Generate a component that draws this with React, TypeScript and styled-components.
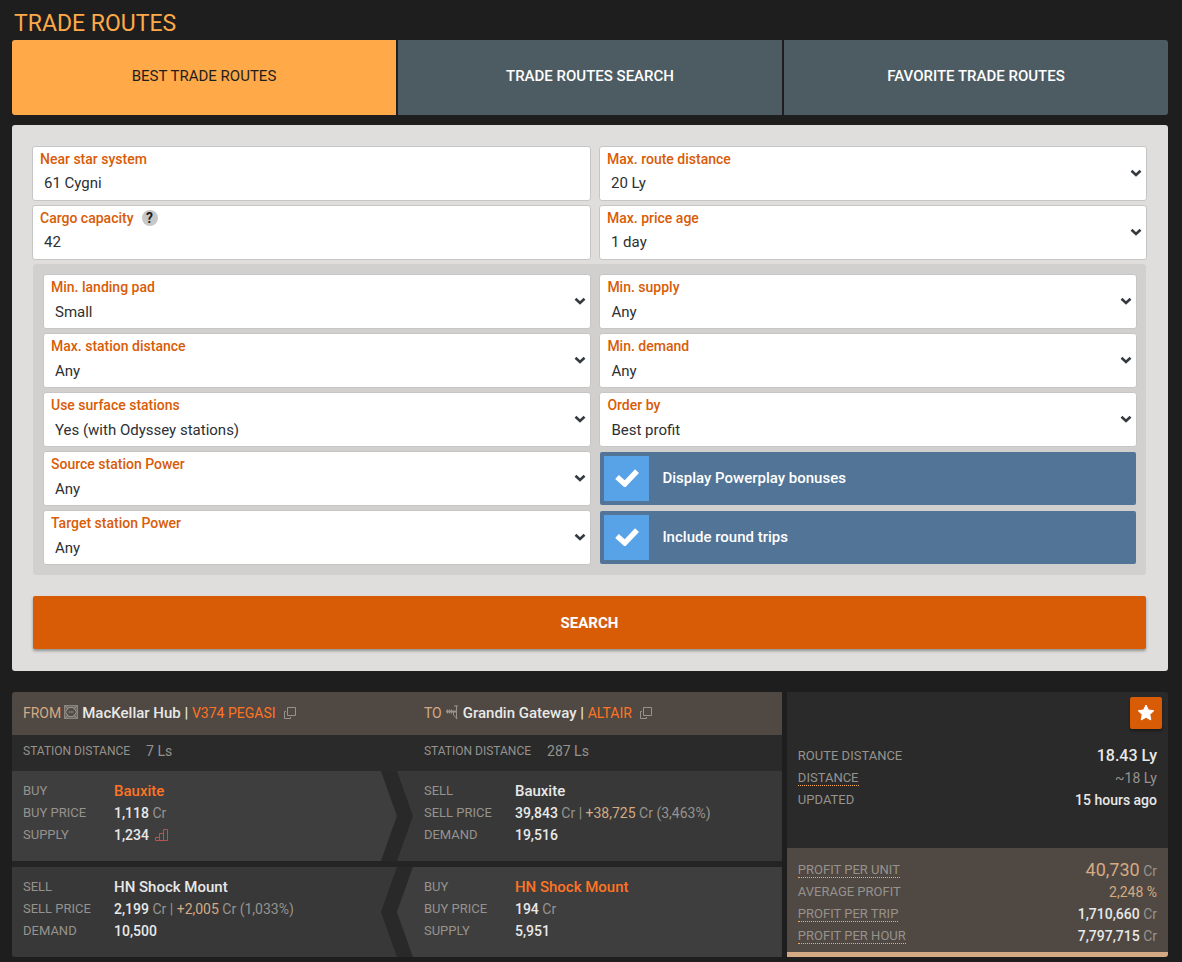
import React from 'react';
import styled, { createGlobalStyle } from 'styled-components';

const Global = createGlobalStyle`
  *, *::before, *::after { box-sizing: border-box; }
  body {
    margin: 0;
    background: #1e1e1e;
    color: #e8e8e8;
    font: 400 15px/22px Roboto, "Liberation Sans", sans-serif;
  }
  button, input, select { font: inherit; }
`;

const Page = styled.main`
  padding: 7px 14px 5px 12px;
`;

const Title = styled.h1`
  margin: 0;
  padding: 0 2px;
  font-size: 23px;
  line-height: 33px;
  font-weight: 400;
  color: #ffa948;
  text-transform: uppercase;
`;

const Tabs = styled.nav`
  display: grid;
  grid-template-columns: repeat(3, 1fr);
  gap: 2px;
  border-radius: 3px;
  overflow: hidden;
`;

const Tab = styled.a<{ $active?: boolean }>`
  display: flex;
  align-items: center;
  justify-content: center;
  height: 75px;
  padding-bottom: 4px;
  background: ${(p) => (p.$active ? '#ffa948' : '#4d5c63')};
  color: ${(p) => (p.$active ? '#1e1e1e' : '#fff')};
  font-size: 15px;
  font-weight: ${(p) => (p.$active ? 400 : 500)};
  text-decoration: none;
  text-transform: uppercase;
`;

const SearchForm = styled.form`
  margin-top: 10px;
  padding: 21px 21px 22px 20px;
  border-radius: 3px;
  background: #dfdedc;
`;

const FieldGrid = styled.div`
  display: grid;
  grid-template-columns: 51fr 50fr;
  gap: 4px 8px;
`;

const Advanced = styled(FieldGrid)`
  margin: 4px 1px 21px;
  padding: 10px 9px 10px 10px;
  border-radius: 3px;
  background: #d1d0ce;

  select { padding-top: 21px; }
`;

const FieldBox = styled.div`
  position: relative;
  height: 55px;
  border: 1px solid #c6c6c6;
  border-radius: 3px;
  background: #fff;
`;

const FieldHead = styled.div`
  position: absolute;
  top: 2px;
  left: 7px;
  display: flex;
  align-items: center;
  gap: 8px;
  line-height: 20px;
  pointer-events: none;
`;

const FieldLabel = styled.label`
  color: #d85c08;
  font-size: 14px;
  font-weight: 500;
`;

const HelpButton = styled.button`
  width: 16px;
  height: 16px;
  padding: 0;
  border: 0;
  border-radius: 50%;
  background: #c8c8c8;
  color: #1e1e1e;
  font-size: 14px;
  font-weight: 700;
  line-height: 16px;
  pointer-events: auto;
`;

const control = `
  display: block;
  width: 100%;
  height: 100%;
  padding: 19px 30px 0 11px;
  border: 0;
  border-radius: 3px;
  background: transparent;
  color: #2c2f33;
  appearance: none;
  outline: none;
`;

const TextInput = styled.input`
  ${control}
`;

const Select = styled.select`
  ${control}
`;

const SelectArrow = styled.svg`
  position: absolute;
  top: 22px;
  right: 4px;
  width: 12px;
  height: 8px;
  pointer-events: none;
`;

const CheckRow = styled.label`
  display: flex;
  align-items: center;
  gap: 13px;
  height: 53px;
  margin: 1px;
  padding: 0 0 1px 4px;
  border-radius: 2px;
  background: #527496;
  color: #fff;
  font-weight: 500;
`;

const CheckCell = styled.span`
  display: grid;
  place-items: center;
  width: 45px;
  height: 45px;
  background: #58a2e7;
`;

const CheckInput = styled.input`
  grid-area: 1 / 1;
  width: 100%;
  height: 100%;
  margin: 0;
  appearance: none;
`;

const CheckMark = styled.svg`
  grid-area: 1 / 1;
  width: 24px;
  height: 18px;
  pointer-events: none;
`;

const SearchButton = styled.button`
  display: block;
  width: calc(100% - 2px);
  height: 53px;
  margin: 0 1px;
  border: 0;
  border-radius: 2px;
  background: #d85c06;
  box-shadow: 0 2px 3px rgba(0, 0, 0, 0.35);
  color: #fff;
  font-size: 15px;
  font-weight: 700;
  text-transform: uppercase;
`;

const Result = styled.section`
  display: grid;
  grid-template-columns: 101fr 50fr;
  gap: 5px;
  margin-top: 21px;
`;

const Legs = styled.div`
  border-radius: 3px 0 0 3px;
  overflow: hidden;
  background: #242424;
`;

const Pair = styled.div<{ $bg: string; $height: number }>`
  display: grid;
  grid-template-columns: 1fr 1fr;
  align-items: center;
  min-height: ${(p) => p.$height}px;
  background: ${(p) => p.$bg};

  & > * { padding-left: 11px; }
  & > * + * { padding-left: 27px; }
`;

const Station = styled.div`
  display: flex;
  align-items: center;
  padding-bottom: 2px;
  white-space: pre;
`;

const Accent = styled.span`
  color: #d4aa84;
`;

const Direction = styled(Accent)`
  font-size: 14px;
`;

const Strong = styled.span`
  color: #e8e8e8;
  font-weight: 500;
`;

const Muted = styled.span`
  color: #96938e;
`;

const Link = styled.a`
  color: #ff7424;
  font-weight: 500;
  text-decoration: none;
`;

const SystemLink = styled(Link)`
  font-size: 14px;
  font-weight: 400;
`;

const TypeIcon = styled.svg`
  width: 14px;
  height: 14px;
  margin: 0 4px 1px 3px;
`;

const CopyButton = styled.button`
  display: flex;
  margin-left: 8px;
  padding: 0;
  border: 0;
  background: none;
`;

const Label = styled.dt`
  color: #96938e;
  font-size: 13px;
  text-transform: uppercase;
`;

const DistanceLabel = styled(Label)`
  font-size: 12px;
`;

const Distance = styled.dl`
  display: flex;
  gap: 16px;
  margin: 0;
  padding-bottom: 5px;
`;

const Value = styled.dd`
  margin: 0;
  font-size: 14px;
`;

const ItemName = styled(Value)`
  font-size: 15px;
`;

const Trades = styled.div`
  display: grid;
  grid-template-columns: 1fr 1fr;
  background: #292929;

  & + & { margin-top: 6px; }
`;

const shapes = {
  outRight: 'polygon(0 0, calc(100% - 16px) 0, 100% 50%, calc(100% - 16px) 100%, 0 100%)',
  inLeft: 'polygon(0 0, 100% 0, 100% 100%, 0 100%, 16px 50%)',
  inRight: 'polygon(0 0, 100% 0, calc(100% - 16px) 50%, 100% 100%, 0 100%)',
  outLeft: 'polygon(16px 0, 100% 0, 100% 100%, 16px 100%, 0 50%)',
};

const Trade = styled.dl<{ $shape: keyof typeof shapes; $buy?: boolean }>`
  display: grid;
  grid-template-columns: 91px 1fr;
  grid-auto-rows: 22px;
  height: 90px;
  margin: 0;
  padding: 9px 0 0 11px;
  background: ${(p) => (p.$buy ? '#3e3e3e' : '#383838')};
  clip-path: ${(p) => shapes[p.$shape]};

  & + & { padding-left: 27px; }
`;

const SupplyIcon = styled.svg`
  width: 13px;
  height: 12px;
  margin-left: 6px;
  vertical-align: -1px;
`;

const Summary = styled.aside`
  display: flex;
  flex-direction: column;
  border-bottom: 5px solid #d4aa84;
  border-radius: 0 3px 3px 0;
  background: #2a2a2a;
  overflow: hidden;
`;

const FavoriteButton = styled.button`
  display: grid;
  place-items: center;
  align-self: flex-end;
  width: 32px;
  height: 32px;
  margin: 5px 6px 16px 0;
  padding: 0 0 2px;
  border: 0;
  border-radius: 2px;
  background: #d85c06;
  box-shadow: 0 2px 3px rgba(0, 0, 0, 0.4);
`;

const Facts = styled.dl<{ $profit?: boolean }>`
  display: grid;
  grid-template-columns: 1fr auto;
  grid-auto-rows: 22px;
  align-items: center;
  margin: ${(p) => (p.$profit ? 'auto 0 0' : '0')};
  padding: ${(p) => (p.$profit ? '11px 11px 5px' : '0 11px')};
  background: ${(p) => (p.$profit ? '#504842' : 'transparent')};
`;

const FactValue = styled(Value)<{ $size?: number }>`
  text-align: right;

  & > span:first-child { font-size: ${(p) => p.$size ?? 14}px; }
`;

const Hint = styled.abbr`
  border-bottom: 1px dotted #ffa948;
  text-decoration: none;
`;

const HintLabel = ({ children }: { children: string }) => (
  <Label><Hint>{children}</Hint></Label>
);

const SelectField = ({ id, label, value }: { id: string; label: string; value: string }) => (
  <FieldBox>
    <FieldHead><FieldLabel htmlFor={id}>{label}</FieldLabel></FieldHead>
    <Select id={id} defaultValue={value}><option>{value}</option></Select>
    <SelectArrow viewBox="0 0 12 8">
      <path d="M1.5 1.8 6 6 10.5 1.8" fill="none" stroke="#343a40" strokeWidth="2.6" />
    </SelectArrow>
  </FieldBox>
);

const CheckField = ({ label }: { label: string }) => (
  <CheckRow>
    <CheckCell>
      <CheckInput type="checkbox" defaultChecked />
      <CheckMark viewBox="0 0 24 18">
        <path d="M2 8 9.8 15 22 2.200" fill="none" stroke="#fff" strokeWidth="5.4" />
      </CheckMark>
    </CheckCell>
    {label}
  </CheckRow>
);

const Copy = () => (
  <CopyButton type="button" aria-label="Copy system name">
    <svg width="12" height="12" viewBox="0 0 12 12" fill="none" stroke="#96938e">
      <path d="M3.5 .5h8v8h-8zM2 4.5H.5v7h6V10" />
    </svg>
  </CopyButton>
);

const CoriolisIcon = () => (
  <TypeIcon viewBox="0 0 14 14" fill="none" stroke="#96938e">
    <rect x=".5" y=".5" width="13" height="13" fill="#6e6862" stroke="#8a857f" />
    <path d="M4.5 2.500h5L12.500 7l-3 4.500h-5L1.500 7z" fill="#544c46" />
    <path d="M1 1l3.500 3M13 1 9.500 4M1 13l3.500-3M13 13l-3.500-3M4.500 7h5" />
  </TypeIcon>
);

const OutpostIcon = () => (
  <TypeIcon viewBox="0 0 14 14" fill="none" stroke="#96938e">
    <path d="M1 6.500h10" strokeWidth="2" />
    <path d="M2.500 4.500v4M4.500 4.500v4M6.500 4.500v4M9 1h4M11.500 1v13M8.500 7v3l3.500 3.500" />
  </TypeIcon>
);

export default function App() {
  return (
    <>
      <Global />
      <Page>
        <Title>Trade routes</Title>
        <Tabs>
          <Tab href="#best" $active>Best trade routes</Tab>
          <Tab href="#search">Trade routes search</Tab>
          <Tab href="#favorites">Favorite trade routes</Tab>
        </Tabs>

        <SearchForm onSubmit={(e) => e.preventDefault()}>
          <FieldGrid>
            <FieldBox>
              <FieldHead><FieldLabel htmlFor="near">Near star system</FieldLabel></FieldHead>
              <TextInput id="near" defaultValue="61 Cygni" />
            </FieldBox>
            <SelectField id="route" label="Max. route distance" value="20 Ly" />
            <FieldBox>
              <FieldHead>
                <FieldLabel htmlFor="cargo">Cargo capacity</FieldLabel>
                <HelpButton type="button">?</HelpButton>
              </FieldHead>
              <TextInput id="cargo" defaultValue="42" />
            </FieldBox>
            <SelectField id="age" label="Max. price age" value="1 day" />
          </FieldGrid>

          <Advanced>
            <SelectField id="pad" label="Min. landing pad" value="Small" />
            <SelectField id="supply" label="Min. supply" value="Any" />
            <SelectField id="station" label="Max. station distance" value="Any" />
            <SelectField id="demand" label="Min. demand" value="Any" />
            <SelectField id="surface" label="Use surface stations" value="Yes (with Odyssey stations)" />
            <SelectField id="order" label="Order by" value="Best profit" />
            <SelectField id="source" label="Source station Power" value="Any" />
            <CheckField label="Display Powerplay bonuses" />
            <SelectField id="target" label="Target station Power" value="Any" />
            <CheckField label="Include round trips" />
          </Advanced>

          <SearchButton type="submit">Search</SearchButton>
        </SearchForm>

        <Result>
          <Legs>
            <Pair $bg="#504842" $height={43}>
              <Station>
                <Direction>FROM</Direction><CoriolisIcon />
                <Strong>MacKellar Hub | </Strong><SystemLink href="#v374">V374 PEGASI</SystemLink><Copy />
              </Station>
              <Station>
                <Direction>TO</Direction><OutpostIcon />
                <Strong>Grandin Gateway | </Strong><SystemLink href="#altair">ALTAIR</SystemLink><Copy />
              </Station>
            </Pair>
            <Pair $bg="#2a2a2a" $height={36}>
              <Distance><DistanceLabel>Station distance</DistanceLabel><Value><Muted>7 Ls</Muted></Value></Distance>
              <Distance><DistanceLabel>Station distance</DistanceLabel><Value><Muted>287 Ls</Muted></Value></Distance>
            </Pair>
            <Trades>
              <Trade $shape="outRight" $buy>
                <Label>Buy</Label><ItemName><Link href="#bauxite">Bauxite</Link></ItemName>
                <Label>Buy price</Label><Value><Strong>1,118</Strong> <Muted>Cr</Muted></Value>
                <Label>Supply</Label>
                <Value>
                  <Strong>1,234</Strong>
                  <SupplyIcon viewBox="0 0 13 12" fill="none" stroke="#b85450">
                    <path d="M.5 8.500h4v3h-4zM4.500 4.500h4v7h-4zM8.500 .5h4v11h-4z" />
                  </SupplyIcon>
                </Value>
              </Trade>
              <Trade $shape="inLeft">
                <Label>Sell</Label><ItemName><Strong>Bauxite</Strong></ItemName>
                <Label>Sell price</Label>
                <Value><Strong>39,843</Strong> <Muted>Cr | </Muted><Accent>+38,725</Accent><Muted> Cr (3,463%)</Muted></Value>
                <Label>Demand</Label><Value><Strong>19,516</Strong></Value>
              </Trade>
            </Trades>
            <Trades>
              <Trade $shape="inRight">
                <Label>Sell</Label><ItemName><Strong>HN Shock Mount</Strong></ItemName>
                <Label>Sell price</Label>
                <Value><Strong>2,199</Strong> <Muted>Cr | </Muted><Accent>+2,005</Accent><Muted> Cr (1,033%)</Muted></Value>
                <Label>Demand</Label><Value><Strong>10,500</Strong></Value>
              </Trade>
              <Trade $shape="outLeft" $buy>
                <Label>Buy</Label><ItemName><Link href="#shock-mount">HN Shock Mount</Link></ItemName>
                <Label>Buy price</Label><Value><Strong>194</Strong> <Muted>Cr</Muted></Value>
                <Label>Supply</Label><Value><Strong>5,951</Strong></Value>
              </Trade>
            </Trades>
          </Legs>

          <Summary>
            <FavoriteButton type="button" aria-label="Add to favorites">
              <svg width="18" height="17" viewBox="0 0 18 17" fill="#fff" stroke="#fff" strokeLinejoin="round">
                <path d="M9 1l2.400 5 5.400 .7-4 3.800 1 5.400L9 13.300l-4.800 2.600 1-5.400-4-3.800 5.400-.7z" />
              </svg>
            </FavoriteButton>
            <Facts>
              <Label>Route distance</Label><FactValue $size={16}><Strong>18.43 Ly</Strong></FactValue>
              <HintLabel>Distance</HintLabel><FactValue><Muted>~18 Ly</Muted></FactValue>
              <Label>Updated</Label><FactValue><Strong>15 hours ago</Strong></FactValue>
            </Facts>
            <Facts $profit>
              <HintLabel>Profit per unit</HintLabel><FactValue $size={18}><Accent>40,730</Accent> <Muted>Cr</Muted></FactValue>
              <Label>Average profit</Label><FactValue><Accent>2,248 %</Accent></FactValue>
              <HintLabel>Profit per trip</HintLabel><FactValue><Strong>1,710,660</Strong> <Muted>Cr</Muted></FactValue>
              <HintLabel>Profit per hour</HintLabel><FactValue><Strong>7,797,715</Strong> <Muted>Cr</Muted></FactValue>
            </Facts>
          </Summary>
        </Result>
      </Page>
    </>
  );
}
